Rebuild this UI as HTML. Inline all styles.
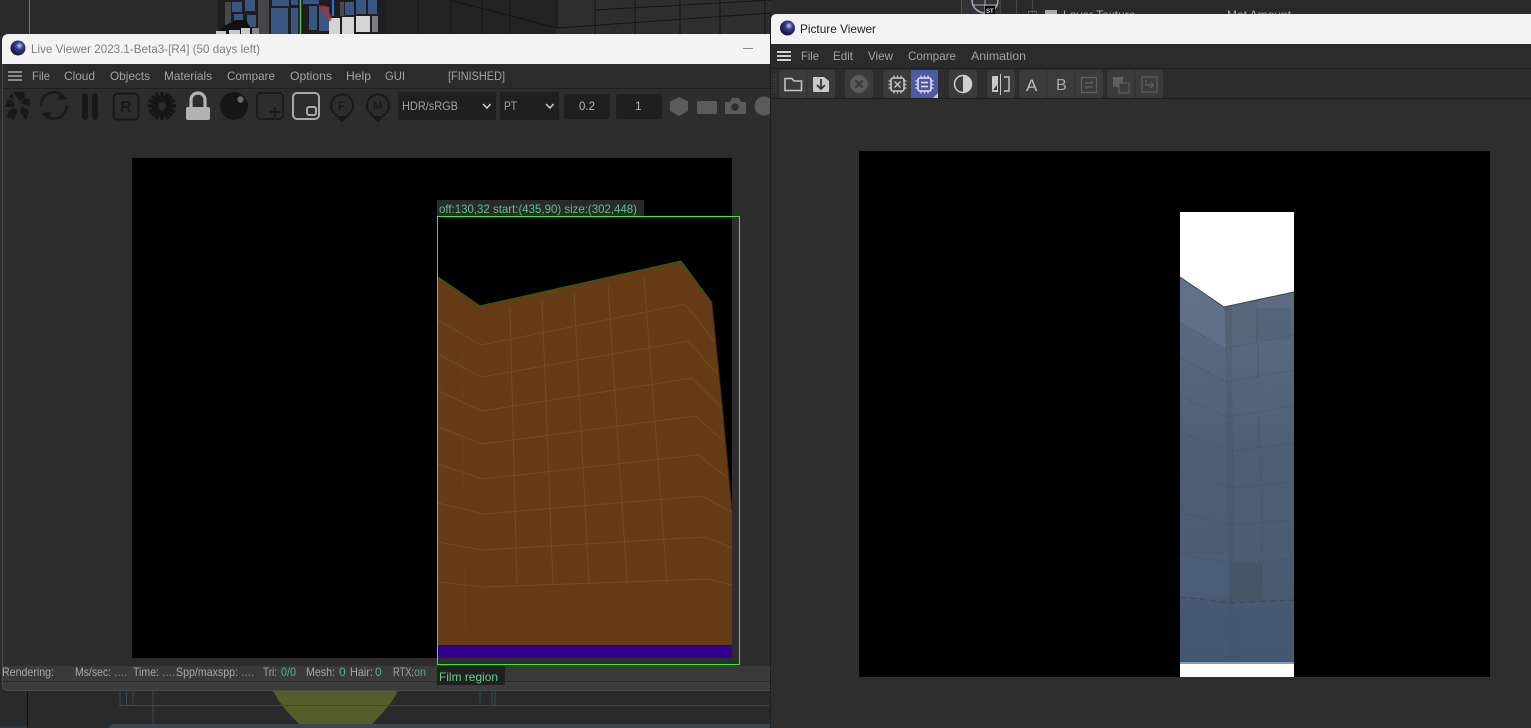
<!DOCTYPE html>
<html lang="en"><head><meta charset="utf-8"><title>Live Viewer and Picture Viewer</title>
<style>
html,body{margin:0;padding:0;background:#2a2a2a;width:1531px;height:728px;overflow:hidden}
svg{display:block;position:absolute;left:0;top:0}
text{font-family:"Liberation Sans",sans-serif;font-size:12px;fill:#a3a3a3}
.g{fill:#62a88f}
.s{fill:#a8a8a8}
</style></head><body>
<svg width="1531" height="728" viewBox="0 0 1531 728" xmlns="http://www.w3.org/2000/svg">
<defs>
<radialGradient id="logo" cx="0.6" cy="0.35" r="0.7"><stop offset="0" stop-color="#c8d0f0"/><stop offset="0.35" stop-color="#3a3f90"/><stop offset="1" stop-color="#0c0c22"/></radialGradient>
<linearGradient id="wall" x1="0" y1="0" x2="0" y2="1"><stop offset="0" stop-color="#5e6f85"/><stop offset="0.45" stop-color="#4e5f75"/><stop offset="1" stop-color="#45586f"/></linearGradient>
<clipPath id="lvclip"><rect x="2" y="34" width="769" height="657"/></clipPath>
</defs>

<!-- desktop background -->
<rect width="1531" height="728" fill="#2a2a2a"/>
<rect x="385" y="0" width="172" height="34" fill="#232323"/>
<rect x="557" y="0" width="214" height="34" fill="#2e2e2e"/>
<g stroke="#141414" stroke-width="1" fill="none">
<path d="M557 0V28M557 28L771 13M450 0L557 28M418 0V34M451 0V34M482 0V34M510 0V34M595 0V34M635 0V34M680 0V34M720 0V34M765 0V34M595 10L771 0"/>
</g>
<line x1="29.500" y1="0" x2="29.500" y2="34" stroke="#777"/>

<!-- building -->
<rect x="218" y="0" width="167" height="34" fill="#1d1e21"/>
<g fill="#3a5680">
<rect x="232" y="2" width="10" height="10"/><rect x="234" y="14" width="9" height="14"/><rect x="245" y="0" width="10" height="11"/><rect x="247" y="15" width="9" height="12"/>
<rect x="271" y="8" width="17" height="26"/><rect x="272" y="0" width="17" height="6"/><rect x="291" y="8" width="7" height="26"/><rect x="291" y="0" width="7" height="5"/>
<rect x="309" y="6" width="8" height="24"/><rect x="319" y="7" width="10" height="24"/><rect x="303" y="0" width="16" height="4"/><rect x="345" y="2" width="9" height="13"/><rect x="356" y="0" width="10" height="14"/><rect x="368" y="0" width="9" height="14"/>
</g>
<rect x="225" y="2" width="6" height="26" fill="#484848"/><rect x="258" y="0" width="11" height="34" fill="#474747"/><rect x="340" y="2" width="4" height="14" fill="#4a4a4a"/>
<path d="M216 34L224 26L236 20L246 20L254 34Z" fill="#101010"/>
<g fill="#c9c9c9"><rect x="216" y="31" width="10" height="3"/><rect x="229" y="30" width="11" height="4"/><rect x="241" y="28" width="9" height="6"/></g>
<rect x="252" y="28" width="7" height="6" fill="#8a8a8a"/>
<g fill="#d4d4d4"><rect x="329" y="18" width="11" height="16"/><rect x="342" y="17" width="12" height="17"/><rect x="356" y="16" width="14" height="16"/></g>
<rect x="372" y="16" width="6" height="16" fill="#7e7e7e"/>
<line x1="300.500" y1="0" x2="300.500" y2="34" stroke="#55c060" stroke-width="1.500"/>
<path d="M333 0V16" stroke="#2f6fd6" stroke-width="2"/>
<path d="M318 5L327 6L332 18L330 22Z" fill="#a8323a" opacity=".8"/>

<!-- top-right desktop -->
<rect x="961" y="0" width="1" height="14" fill="#555"/><rect x="962" y="0" width="38" height="14" fill="#333"/><rect x="1000" y="0" width="1" height="14" fill="#444"/>
<circle cx="985" cy="0" r="13" fill="none" stroke="#a6acc4" stroke-width="1.500"/><path d="M985 0V13M972 5H998" stroke="#a6acc4"/>
<rect x="985" y="6" width="10" height="8" fill="#0c0c0c"/>
<text x="986" y="13" style="font-size:6px;fill:#ddd;font-weight:bold">ST</text>
<path d="M1016.500 0V14M1032.500 0V14" stroke="#484848"/>
<rect x="1028.500" y="11.500" width="8" height="8" fill="none" stroke="#666"/>
<rect x="1045" y="10" width="12" height="6" fill="#aaa"/>
<text x="1063" y="19" class="s">Layer Texture</text>
<text x="1227" y="19" class="s">Mat Amount</text>

<!-- desktop bottom -->
<path d="M273 691H398C390 706 378 718 368 728H304C292 718 281 706 273 691Z" fill="#565d2d"/>
<path d="M120 705.500H771M133 691V706M120 691V706M126.500 691V706M153 691V728M480 691V706M492 691V706M495 691V706" stroke="#38485a" fill="none"/>
<path d="M0 727H27" stroke="#33475b"/><line x1="27.500" y1="691" x2="27.500" y2="728" stroke="#111"/>
<path d="M108 728L112 724H771V728Z" fill="#394753"/>

<!-- Live Viewer window -->
<g clip-path="url(#lvclip)">
<rect x="2" y="34" width="769" height="657" rx="7" fill="#2d2d2d"/>
<path d="M2 64V41Q2 34 9 34H771V64Z" fill="#f3f3f3"/>
<rect x="2" y="64" width="769" height="24" fill="#2b2b2b"/>
<rect x="2" y="88" width="769" height="1" fill="#1f1f1f"/>
<rect x="2" y="666" width="769" height="15" fill="#3a3a3a"/>
<rect x="2" y="681" width="769" height="1" fill="#2b2b2b"/>
<path d="M2 682H771V691H9Q2 691 2 684Z" fill="#3c3c3c"/>
</g>
<path d="M2.500 64V684Q2.500 690.500 9 690.500H771" fill="none" stroke="#4a4a4a"/>
<circle cx="18" cy="48" r="7.500" fill="url(#logo)"/>
<text x="31" y="53" textLength="229" lengthAdjust="spacingAndGlyphs" style="fill:#7e7e7e">Live Viewer 2023.1-Beta3-[R4] (50 days left)</text>
<rect x="743" y="48" width="10" height="1" fill="#8a8a8a"/>

<path d="M8 72H22M8 76H22M8 80H22" stroke="#979797" stroke-width="1.700"/>
<g>
<text x="32" y="80" textLength="18" lengthAdjust="spacingAndGlyphs">File</text>
<text x="64" y="80" textLength="31" lengthAdjust="spacingAndGlyphs">Cloud</text>
<text x="110" y="80" textLength="40" lengthAdjust="spacingAndGlyphs">Objects</text>
<text x="164" y="80" textLength="48" lengthAdjust="spacingAndGlyphs">Materials</text>
<text x="227" y="80" textLength="48" lengthAdjust="spacingAndGlyphs">Compare</text>
<text x="290" y="80" textLength="42" lengthAdjust="spacingAndGlyphs">Options</text>
<text x="346" y="80" textLength="25" lengthAdjust="spacingAndGlyphs">Help</text>
<text x="385" y="80" textLength="20" lengthAdjust="spacingAndGlyphs">GUI</text>
<text x="448" y="80" textLength="57" lengthAdjust="spacingAndGlyphs">[FINISHED]</text>
</g>

<!-- LV toolbar icons -->
<g fill="#181818" stroke="none">
<path d="M13 92L20 101L25 97L24 92ZM24 98L21 103L30 106L30 99ZM22 106L20 112L26 120L29 111ZM18 110L14 120L7 117L8 112L13 108ZM14 107L5 107L8 99L14 102ZM14 100L9 97L12 93Z"/>
</g>
<circle cx="18" cy="106" r="3.500" fill="#2d2d2d"/>
<g fill="none" stroke="#1a1a1a" stroke-width="2.600">
<path d="M41 107A13 13 0 0 1 63 96"/><path d="M67 105A13 13 0 0 1 46 116"/>
</g>
<path d="M60 92L68 99L58 100ZM49 120L41 113L51 112Z" fill="#1a1a1a"/>
<rect x="82" y="93" width="6" height="27" rx="3" fill="#181818"/><rect x="92" y="93" width="6" height="27" rx="3" fill="#181818"/>
<rect x="113.500" y="93.500" width="25" height="26" rx="4" fill="none" stroke="#181818" stroke-width="2"/>
<text x="120" y="112" style="font-size:16px;fill:#181818;font-weight:bold">R</text>
<g fill="#161616">
<circle cx="162" cy="106" r="10.500"/>
<g stroke="#161616" stroke-width="3.500"><path d="M162 92V120M148 106H176M152 96L172 116M172 96L152 116M156 93L168 119M168 93L156 119M149 100L175 112M175 100L149 112"/></g>
</g>
<circle cx="162" cy="106" r="4" fill="#2d2d2d"/>
<path d="M191 108V100A7 7 0 0 1 205 100V108" fill="none" stroke="#b3b3b3" stroke-width="3.200"/>
<rect x="186" y="107" width="24" height="13" rx="2" fill="#b3b3b3"/>
<circle cx="234" cy="106" r="14" fill="#161616"/><circle cx="240.500" cy="99.500" r="3.200" fill="#6a6a6a"/>
<rect x="257" y="93" width="26" height="26" rx="4" fill="none" stroke="#1a1a1a" stroke-width="2"/>
<path d="M270 112H280M275 107V117" stroke="#1a1a1a" stroke-width="2"/>
<rect x="293" y="93" width="26" height="26" rx="4" fill="none" stroke="#a8a8a8" stroke-width="2"/>
<rect x="307" y="107" width="9" height="8" rx="2" fill="none" stroke="#a8a8a8" stroke-width="2"/>
<g fill="none" stroke="#181818" stroke-width="2">
<path d="M342 121L334 113A11 11 0 1 1 350 113Z"/><path d="M378 121L370 113A11 11 0 1 1 386 113Z"/>
</g>
<text x="338" y="110" style="font-size:12px;fill:#181818;font-weight:bold">F</text>
<text x="373" y="109" style="font-size:11px;fill:#181818;font-weight:bold">M</text>
<path d="M342 121L337 116H347ZM378 121L373 116H383Z" fill="#181818"/>

<rect x="398" y="92" width="98" height="28" fill="#1f1f1f"/>
<rect x="500" y="92" width="59" height="28" fill="#1f1f1f"/>
<rect x="564" y="94" width="46" height="25" rx="3" fill="#1f1f1f"/>
<rect x="616" y="94" width="46" height="25" rx="3" fill="#1f1f1f"/>
<text x="402" y="110" textLength="56" lengthAdjust="spacingAndGlyphs">HDR/sRGB</text>
<text x="504" y="110" textLength="13" lengthAdjust="spacingAndGlyphs">PT</text>
<path d="M483 104L487 108L490.500 104M546 104L550 108L553.500 104" fill="none" stroke="#ccc" stroke-width="1.500"/>
<text x="579" y="110" textLength="16" lengthAdjust="spacingAndGlyphs" style="fill:#b5b5b5">0.2</text>
<text x="635" y="110" style="fill:#b5b5b5">1</text>
<path d="M679 97L688 101.500V111L679 116L670 111V101.500Z" fill="#5b5b5b"/>
<rect x="697" y="101" width="20" height="13" rx="2" fill="#5b5b5b"/>
<path d="M725 102H730L732 98H739L741 102H746V114H725Z" fill="#5b5b5b"/><circle cx="735" cy="107" r="3.800" fill="#2d2d2d"/>
<circle cx="764" cy="106" r="9.500" fill="#5b5b5b"/>

<!-- LV render -->
<rect x="132" y="158" width="600" height="500" fill="#000"/>
<path d="M438 277L480 306L681 261L712 303L722.700 410L732 510V645H438Z" fill="#653c16"/>
<path d="M438 277L480 306L681 261L712 303" fill="none" stroke="#2f5a0f" stroke-width="1.200"/>
<path d="M712 303L722.700 410L732 510" fill="none" stroke="#3a2410" stroke-width="1"/>
<g fill="none" stroke="#7a5a20" stroke-width="1" opacity=".6">
<path d="M438 320L481 345L685 304L715 342"/>
<path d="M438 354L481 377L688 341L718 375"/>
<path d="M438 391L482 411L692 378L722 408"/>
<path d="M438 427L482 444L695 416L725 442"/>
<path d="M438 464L483 479L698 455L728 478"/>
<path d="M438 503L483 514L702 496L732 512"/>
<path d="M438 542L483 550L705 537L732 548"/>
<path d="M438 582L485 587L708 579L732 585"/>
<path d="M510 307L517 586M542 300L553 585M574 293L589 583M608 285L627 582M644 277L667 582"/>
</g>
<path d="M462 302L465 643M442 290V643" fill="none" stroke="#6e4c1c" stroke-width="1" opacity=".35"/>
<rect x="438" y="645" width="294" height="13" fill="#30008c"/>
<rect x="437.500" y="216.500" width="302" height="448" fill="none" stroke="#39f01c" stroke-width="1"/>
<rect x="437" y="200" width="207" height="16" fill="#2a2a2a"/>
<text x="439" y="213" textLength="198" lengthAdjust="spacingAndGlyphs" style="fill:#60bd8a">off:130,32 start:(435,90) size:(302,448)</text>
<rect x="437" y="666" width="68" height="19" fill="#202020"/>
<rect x="437" y="664" width="303" height="1" fill="#39f01c"/>
<text x="439" y="681" textLength="59" lengthAdjust="spacingAndGlyphs" style="fill:#60cf90">Film region</text>

<!-- status -->
<text x="2" y="676" textLength="52" lengthAdjust="spacingAndGlyphs" class="s">Rendering:</text>
<text x="75" y="676" textLength="36" lengthAdjust="spacingAndGlyphs" class="s">Ms/sec:</text><text x="114" y="676" class="g">....</text>
<text x="133" y="676" textLength="26" lengthAdjust="spacingAndGlyphs" class="s">Time:</text><text x="162" y="676" class="g">....</text>
<text x="176" y="676" textLength="62" lengthAdjust="spacingAndGlyphs" class="s">Spp/maxspp:</text><text x="241" y="676" class="g">....</text>
<text x="263" y="676" textLength="14" lengthAdjust="spacingAndGlyphs" class="s">Tri:</text><text x="281" y="676" textLength="15" lengthAdjust="spacingAndGlyphs" class="g">0/0</text>
<text x="306" y="676" textLength="29" lengthAdjust="spacingAndGlyphs" class="s">Mesh:</text><text x="339" y="676" class="g">0</text>
<text x="350" y="676" textLength="23" lengthAdjust="spacingAndGlyphs" class="s">Hair:</text><text x="375" y="676" class="g">0</text>
<text x="393" y="676" textLength="21" lengthAdjust="spacingAndGlyphs" class="s">RTX:</text><text x="414" y="676" textLength="12" lengthAdjust="spacingAndGlyphs" class="g">on</text>

<!-- Picture Viewer window -->
<rect x="771" y="14" width="760" height="714" fill="#2e2e2e"/>
<path d="M771 44V20Q771 14 777 14H1531V44Z" fill="#f3f3f3"/>
<rect x="771" y="44" width="760" height="24" fill="#2b2b2b"/>
<rect x="771" y="68" width="760" height="1" fill="#1f1f1f"/>
<rect x="771" y="69" width="760" height="29" fill="#2d2d2d"/>
<rect x="771" y="98" width="760" height="1" fill="#1f1f1f"/>
<rect x="770" y="14" width="1" height="714" fill="#1e1e1e"/>
<circle cx="787.500" cy="28" r="7.500" fill="url(#logo)"/>
<text x="800" y="33" textLength="76" lengthAdjust="spacingAndGlyphs" style="fill:#222">Picture Viewer</text>
<path d="M777 52H791M777 56H791M777 60H791" stroke="#e8e8e8" stroke-width="1.700"/>
<text x="801" y="60" textLength="18" lengthAdjust="spacingAndGlyphs">File</text>
<text x="833" y="60" textLength="20" lengthAdjust="spacingAndGlyphs">Edit</text>
<text x="868" y="60" textLength="25" lengthAdjust="spacingAndGlyphs">View</text>
<text x="908" y="60" textLength="48" lengthAdjust="spacingAndGlyphs">Compare</text>
<text x="971" y="60" textLength="55" lengthAdjust="spacingAndGlyphs">Animation</text>

<!-- PV toolbar -->
<path d="M773.500 74V94M775.500 74V94" stroke="#484848" stroke-dasharray="1 1.500"/>
<g fill="#3b3b3b">
<rect x="779" y="70" width="56" height="28" rx="3"/>
<rect x="845" y="70" width="28" height="28" rx="3"/>
<rect x="883" y="70" width="55" height="28" rx="3"/>
<rect x="949" y="70" width="28" height="28" rx="3"/>
<rect x="987" y="70" width="28" height="28" rx="3"/>
<rect x="1019" y="70" width="84" height="28" rx="3"/>
<rect x="1107" y="70" width="56" height="28" rx="3"/>
</g>
<path d="M807 70V98M1047 70V98M1075 70V98M1135 70V98" stroke="#2f2f2f"/>
<path d="M785 78.500H792L794 81H801.500V90.500H785Z" fill="none" stroke="#c4c4c4" stroke-width="1.600"/>
<path d="M813 77H824L829 81V91Q829 92 828 92H814Q813 92 813 91Z" fill="#c9c9c9"/>
<path d="M821 79V88M817 85L821 89L825 85" fill="none" stroke="#333" stroke-width="1.800"/>
<circle cx="859" cy="84" r="9" fill="#5a5a5a"/><path d="M855.500 80.500L862.500 87.500M862.500 80.500L855.500 87.500" stroke="#383838" stroke-width="2.200"/>
<rect x="911" y="70" width="27" height="28" fill="#4f5aa6"/>
<path d="M938 93V98H933Z" fill="#ccc"/>
<rect x="891" y="78" width="13" height="13" rx="2" fill="none" stroke="#c8c8c8" stroke-width="1.600"/>
<path d="M894.500 81.500L900.500 87.500M900.500 81.500L894.500 87.500" stroke="#c8c8c8" stroke-width="1.400"/>
<path d="M894 75.500V78M897.500 75.500V78M901 75.500V78M894 91V93.500M897.500 91V93.500M901 91V93.500M888.500 81H891M888.500 84.500H891M888.500 88H891M904 81H906.500M904 84.500H906.500M904 88H906.500" stroke="#c8c8c8" stroke-width="1.200"/>
<rect x="918" y="78" width="13" height="13" rx="2" fill="none" stroke="#e0e0ee" stroke-width="1.600"/>
<path d="M921 82.500H928M921 86.500H928" stroke="#e0e0ee" stroke-width="1.500"/>
<path d="M921 75.500V78M924.500 75.500V78M928 75.500V78M921 91V93.500M924.500 91V93.500M928 91V93.500M915.500 81H918M915.500 84.500H918M915.500 88H918M931 81H933.500M931 84.500H933.500M931 88H933.500" stroke="#e0e0ee" stroke-width="1.200"/>
<circle cx="963" cy="84" r="8.500" fill="none" stroke="#d0d0d0" stroke-width="1.500"/><path d="M963 75.500A8.500 8.500 0 0 1 963 92.500Z" fill="#d0d0d0"/>
<path d="M998 76H993Q992 76 992 77V91Q992 92 993 92H998Z" fill="#c9c9c9"/>
<path d="M1004 77H1009V91H1004" fill="none" stroke="#c9c9c9" stroke-width="1.400"/>
<path d="M1000.500 74V95" stroke="#c9c9c9"/><path d="M997 85V90H993Z" fill="#3b3b3b"/>
<text x="1026" y="91" style="font-size:17px;fill:#bdbdbd">A</text>
<text x="1056" y="90" style="font-size:16px;fill:#a8a8a8">B</text>
<rect x="1081.500" y="77.500" width="15" height="15" fill="none" stroke="#5f5f5f" stroke-width="1.300"/>
<path d="M1085 83H1093M1093 83L1091 81M1093 87H1085M1085 87L1087 89" fill="none" stroke="#5f5f5f" stroke-width="1.200"/>
<rect x="1113" y="77" width="10" height="10" fill="#5f5f5f"/><rect x="1119" y="83" width="10" height="10" fill="#3b3b3b" stroke="#5f5f5f" stroke-width="1.200"/>
<rect x="1142" y="77" width="15" height="15" fill="none" stroke="#5f5f5f" stroke-width="1.300"/>
<path d="M1146 80V85H1153M1150.500 82L1153.500 85L1150.500 88" fill="none" stroke="#5f5f5f" stroke-width="1.300"/>

<!-- PV render -->
<rect x="859" y="151" width="631" height="526" fill="#000"/>
<rect x="1180" y="212" width="114" height="465" fill="#fff"/>
<path d="M1180 277L1224 307L1294 292V663H1180Z" fill="url(#wall)"/>
<path d="M1224 307L1258 300V345L1226 349Z" fill="#566779" opacity=".7"/>
<path d="M1225 307L1232 307L1234 663H1229Z" fill="#43525f" opacity=".3"/>
<path d="M1180 277L1224 307L1226 349L1180 322Z" fill="#63758c" opacity=".6"/>
<path d="M1180 357L1226 382V417L1180 396Z" fill="#53647a" opacity=".5"/>
<rect x="1257" y="308" width="34" height="32" fill="#4c5c70" opacity=".4"/>
<rect x="1229" y="563" width="34" height="39" fill="#465467"/>
<rect x="1180" y="554" width="49" height="43" fill="#4f6384" opacity=".35"/>
<rect x="1180" y="603" width="114" height="60" fill="#445874" opacity=".4"/>
<g fill="none" stroke="#38444f" stroke-width="1" stroke-dasharray="1 3" opacity=".8">
<path d="M1180 322L1225 348L1294 335"/>
<path d="M1180 357L1226 382L1294 370"/>
<path d="M1180 396L1227 417L1294 406"/>
<path d="M1180 432L1228 451L1294 443"/>
<path d="M1182 473L1230 488L1294 482"/>
<path d="M1181 513L1230 525L1294 520"/>
<path d="M1180 554L1228 563L1294 559"/>
<path d="M1180 597L1232 603L1294 600" stroke-dasharray="6 4"/>
</g>
<path d="M1257 308V340M1258 345V378M1259 417V450M1261 455V482M1262 490V555" fill="none" stroke="#3f4c5c" stroke-width="1" opacity=".5"/>
<path d="M1180 277L1224 307L1294 292" fill="none" stroke="#38434f" stroke-width="1"/>
<rect x="1180" y="662" width="114" height="2" fill="#7f9cc4"/>
<rect x="1180" y="664" width="114" height="13" fill="#fff"/>
</svg>
</body></html>
